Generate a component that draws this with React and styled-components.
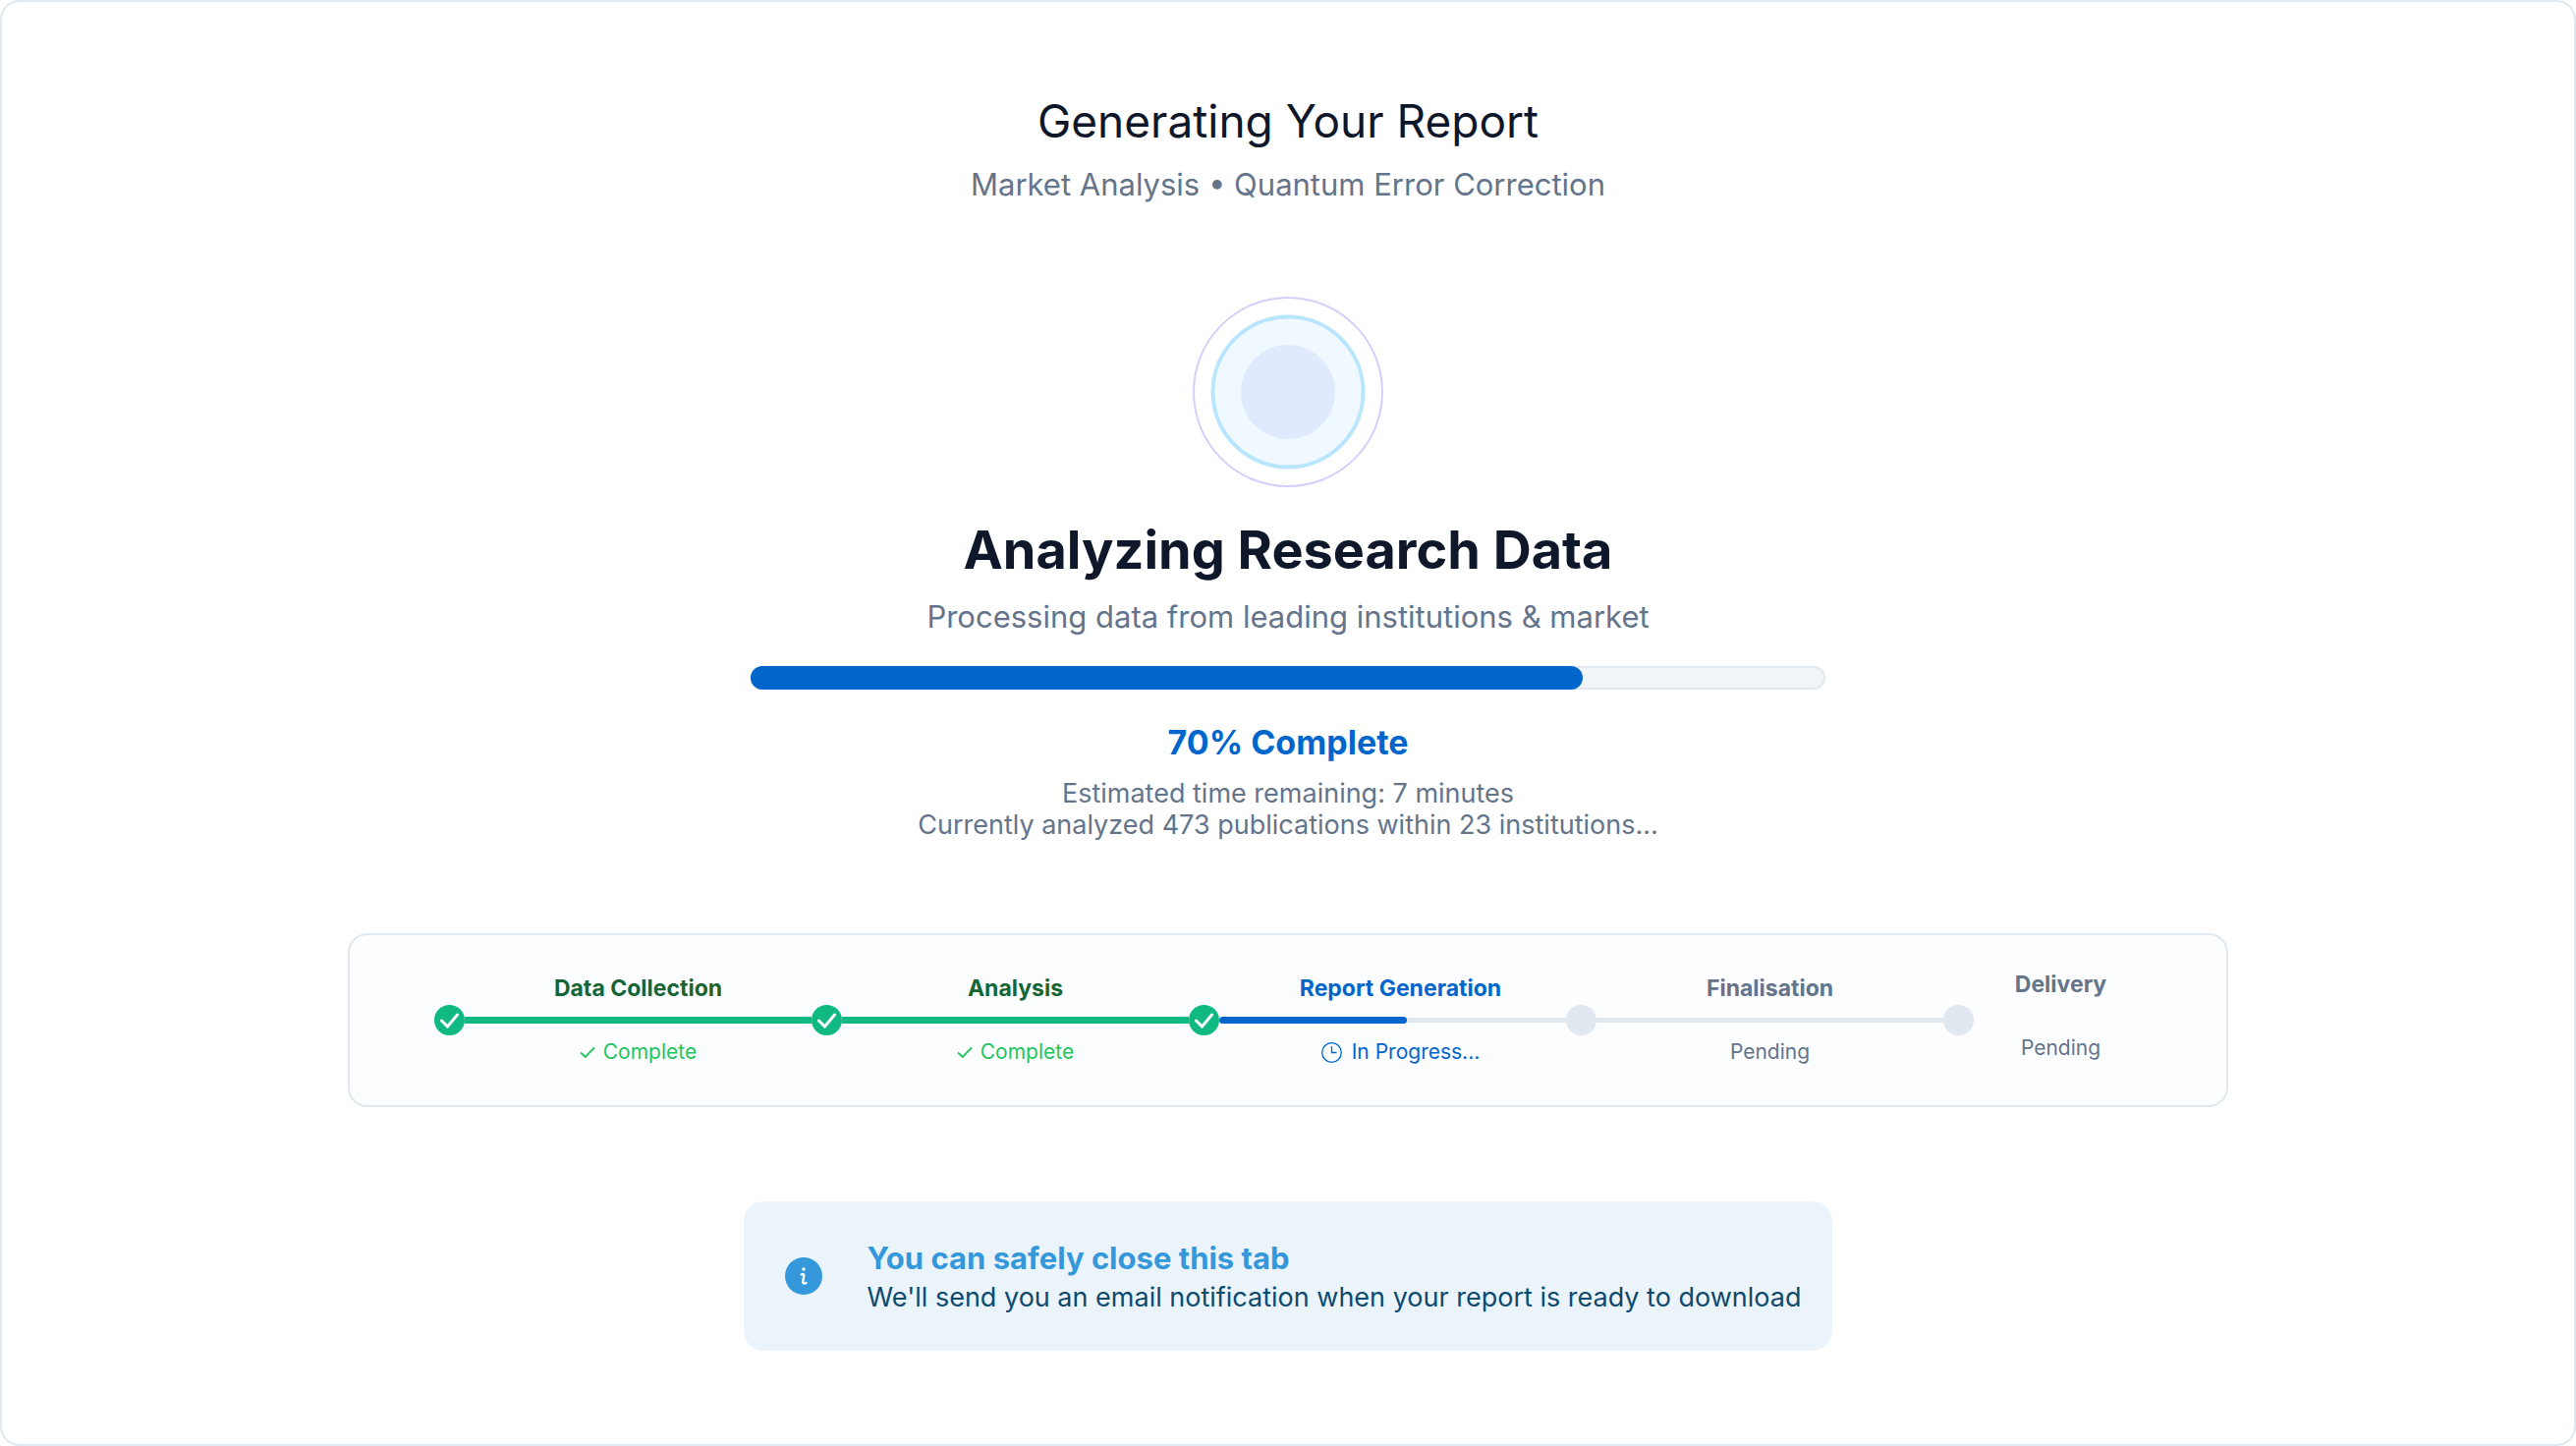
import React from "react";
import styled, { createGlobalStyle } from "styled-components";

const GlobalStyle = createGlobalStyle`
  *, *::before, *::after { box-sizing: border-box; }
  body {
    margin: 0;
    background: #ffffff;
    font-family: Inter, "Liberation Sans", sans-serif;
  }
  h1, h2, h3, p, ol { margin: 0; padding: 0; }
`;

const Page = styled.main`
  min-height: 100vh;
  padding: 93px 32px;
  display: flex;
  flex-direction: column;
  align-items: center;
  border: 2px solid #e2e8f0;
  border-radius: 20px;
  background: #ffffff;
  text-align: center;
`;

const Header = styled.header`
  display: flex;
  flex-direction: column;
  gap: 17px;
`;

const Title = styled.h1`
  font-size: 46px;
  line-height: 56px;
  font-weight: 400;
  color: #0f172a;
`;

const Lead = styled.p`
  font-size: 31px;
  line-height: 40px;
  color: #64748b;
`;

const Status = styled.section`
  width: 100%;
  margin-top: 94px;
  display: flex;
  flex-direction: column;
  align-items: center;
`;

const Orb = styled.svg`
  width: 194px;
  height: 194px;
  display: block;
`;

const Heading = styled.h2`
  margin: 30px 0 14px;
  font-size: 54px;
  line-height: 68px;
  font-weight: 700;
  color: #0f172a;
`;

const ProgressTrack = styled.div`
  width: 100%;
  max-width: 1094px;
  height: 24px;
  margin-top: 30px;
  border-radius: 12px;
  background: #f1f5f9;
  box-shadow: inset 0 0 0 2px #e2e8f0;
`;

const ProgressFill = styled.div`
  height: 100%;
  border-radius: 12px;
  background: #0066cc;
`;

const Percent = styled.p`
  margin: 32px 0 14px;
  font-size: 34px;
  line-height: 44px;
  font-weight: 700;
  color: #0066cc;
`;

const Detail = styled.p`
  font-size: 27px;
  line-height: 32px;
  color: #64748b;
`;

const StageCard = styled.section`
  width: 100%;
  max-width: 1914px;
  margin-top: 94px;
  padding: 35px 80px 35px 86px;
  border: 2px solid #e2e8f0;
  border-radius: 20px;
  background: #fcfdff;
`;

const StageList = styled.ol`
  display: flex;
  list-style: none;
`;

const Stage = styled.li`
  flex: ${(p) => (p.$last ? "177 1 31px" : "353 1 31px")};
  display: flex;
  align-items: center;
`;

const Dot = styled.span`
  flex: none;
  width: 31px;
  height: 31px;
  display: flex;
  align-items: center;
  justify-content: center;
  border-radius: 50%;
  background: ${(p) => (p.$done ? "#10b981" : "#e2e8f0")};
`;

const StageBody = styled.div`
  flex: 1;
  padding-bottom: ${(p) => (p.$last ? "8px" : "0")};
  display: flex;
  flex-direction: column;
  gap: 14px;
`;

const StageName = styled.h3`
  padding-left: ${(p) => (p.$active ? "16px" : "0")};
  font-size: 23px;
  line-height: 30px;
  font-weight: 700;
  color: ${(p) => p.$color};
`;

const LineSlot = styled.div`
  height: 7px;
  display: flex;
  align-items: center;
  background: linear-gradient(${(p) => (p.$show ? "#e2e8f0, #e2e8f0" : "transparent, transparent")}) center / 100% 5px no-repeat;
`;

const LineFill = styled.div`
  height: 7px;
  border-radius: ${(p) => (p.$round ? "4px" : "0")};
  background: ${(p) => p.$color};
`;

const StageState = styled.p`
  padding-left: ${(p) => (p.$active ? "16px" : "0")};
  display: flex;
  align-items: center;
  justify-content: center;
  gap: ${(p) => (p.$active ? "10px" : "8px")};
  font-size: 21px;
  line-height: 30px;
  color: ${(p) => p.$color};
`;

const Notice = styled.aside`
  margin-top: 96px;
  padding: 34px 32px 34px 42px;
  display: flex;
  align-items: center;
  gap: 46px;
  border-radius: 20px;
  background: #ebf4fb;
  text-align: left;
`;

const NoticeBody = styled.div`
  padding-top: 4px;
`;

const NoticeTitle = styled.h2`
  font-size: 31px;
  line-height: 40px;
  font-weight: 700;
  color: #3498db;
`;

const NoticeText = styled.p`
  font-size: 27px;
  line-height: 40px;
  color: #0c4a6e;
`;

const palette = {
  done: { name: "#166534", state: "#22c55e" },
  active: { name: "#0066cc", state: "#0066cc" },
  pending: { name: "#64748b", state: "#64748b" },
};

const stages = [
  { name: "Data Collection", kind: "done", state: "Complete", dot: true, fill: 100 },
  { name: "Analysis", kind: "done", state: "Complete", dot: true, fill: 100 },
  { name: "Report Generation", kind: "active", state: "In Progress...", dot: true, fill: 54 },
  { name: "Finalisation", kind: "pending", state: "Pending", fill: 0 },
  { name: "Delivery", kind: "pending", state: "Pending", fill: 0 },
];

const DotCheck = () => (
  <svg width="31" height="31" viewBox="0 0 31 31" fill="none" aria-hidden="true">
    <path d="M7.5 16 L13.5 22 L23.5 10" stroke="#fff" strokeWidth="3" strokeLinecap="round" strokeLinejoin="miter" />
  </svg>
);

const SmallCheck = () => (
  <svg width="16" height="14" viewBox="0 0 16 14" fill="none" aria-hidden="true">
    <path d="M1.5 8 L5.8 12 L14.5 3" stroke="currentColor" strokeWidth="1.8" strokeLinecap="round" />
  </svg>
);

const Clock = () => (
  <svg width="21" height="21" viewBox="0 0 21 21" fill="none" stroke="currentColor" strokeWidth="1.3" aria-hidden="true">
    <circle cx="10.5" cy="10.5" r="9.8" />
    <path d="M10.5 4 V10.5 H15.5" />
  </svg>
);

const InfoIcon = () => (
  <svg width="38" height="38" viewBox="0 0 38 38" fill="none" aria-hidden="true">
    <circle cx="19" cy="19" r="19" fill="#3498db" />
    <circle cx="19" cy="12" r="1.7" fill="#fff" />
    <path d="M16.8 17.4 C18.6 16.6 19.8 17 19.2 19.4 L18.4 23.6 C17.8 26.6 19.2 27.2 21.4 26" stroke="#fff" strokeWidth="2.4" strokeLinecap="round" />
  </svg>
);

export default function App() {
  const barWidth = 77.4;
  return (
    <>
      <GlobalStyle />
      <Page>
        <Header>
          <Title>Generating Your Report</Title>
          <Lead>Market Analysis • Quantum Error Correction</Lead>
        </Header>

        <Status>
          <Orb viewBox="0 0 194 194" aria-hidden="true">
            <circle cx="97" cy="97" r="96" fill="#fff" stroke="#d2d0fb" strokeWidth="2" />
            <circle cx="97" cy="97" r="76.5" fill="#f0f9ff" stroke="#b9e6fe" strokeWidth="4" />
            <circle cx="97" cy="97" r="48" fill="#e0e9fe" />
          </Orb>
          <Heading>Analyzing Research Data</Heading>
          <Lead>Processing data from leading institutions &amp; market</Lead>
          <ProgressTrack role="progressbar" aria-label="Report progress" aria-valuenow={70} aria-valuemin={0} aria-valuemax={100}>
            <ProgressFill style={{ width: `${barWidth}%` }} />
          </ProgressTrack>
          <Percent>70% Complete</Percent>
          <Detail>Estimated time remaining: 7 minutes</Detail>
          <Detail>Currently analyzed 473 publications within 23 institutions...</Detail>
        </Status>

        <StageCard>
          <StageList>
            {stages.map((s, i) => {
              const last = i === stages.length - 1;
              const active = s.kind === "active";
              const colors = palette[s.kind];
              return (
                <Stage key={s.name} $last={last}>
                  <Dot $done={s.dot}>{s.dot && <DotCheck />}</Dot>
                  <StageBody $last={last}>
                    <StageName $color={colors.name} $active={active}>{s.name}</StageName>
                    <LineSlot $show={!last}>
                      {s.fill > 0 && (
                        <LineFill
                          $color={active ? "#0066cc" : "#10b981"}
                          $round={active}
                          style={{ width: `${s.fill}%` }}
                        />
                      )}
                    </LineSlot>
                    <StageState $color={colors.state} $active={active}>
                      {s.kind === "done" && <SmallCheck />}
                      {active && <Clock />}
                      {s.state}
                    </StageState>
                  </StageBody>
                </Stage>
              );
            })}
          </StageList>
        </StageCard>

        <Notice>
          <InfoIcon />
          <NoticeBody>
            <NoticeTitle>You can safely close this tab</NoticeTitle>
            <NoticeText>We'll send you an email notification when your report is ready to download</NoticeText>
          </NoticeBody>
        </Notice>
      </Page>
    </>
  );
}
